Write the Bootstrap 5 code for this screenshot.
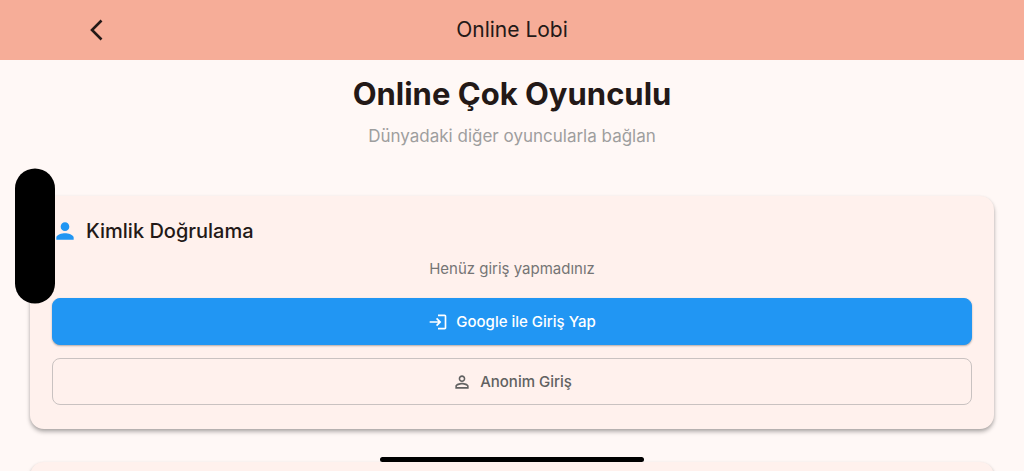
<!DOCTYPE html>
<html lang="tr">
<head>
<meta charset="utf-8">
<meta name="viewport" content="width=device-width, initial-scale=1">
<title>Online Lobi</title>
<link href="https://cdn.jsdelivr.net/npm/bootstrap@5.3.0/dist/css/bootstrap.min.css" rel="stylesheet">
<style>
  body { font-family: Inter, "Liberation Sans", sans-serif; background: #fff8f6; color: #231917; }
  .app-shell { height: 100vh; }
  .app-bar { height: 60px; background: #f6ad98; padding: 0 84px; }
  .app-title { font-size: 21px; line-height: 28px; font-weight: 400; }
  .back-btn { left: 84px; width: 26px; height: 26px; color: #231917; }
  .lobby { padding: 14px 30px 0; }
  .lobby-title { font-size: 31px; line-height: 40px; font-weight: 700; }
  .lobby-sub { font-size: 17px; line-height: 24px; color: #9e9e9e; margin: 10px 0 48px; }
  .panel { background: #fff1ed; border-radius: 14px; box-shadow: 0 3px 4px rgba(0,0,0,.27), 0 1px 3px rgba(0,0,0,.1); padding: 20px 22px 24px; margin-bottom: 33px; }
  .panel-title { font-size: 20px; line-height: 30px; font-weight: 500; }
  .panel-icon { width: 26px; height: 26px; color: #2196f3; }
  .status { font-size: 15px; line-height: 20px; color: #757575; margin: 13px 0 19px; }
  .actions { gap: 13px; }
  .action { --bs-btn-font-size: 15px; --bs-btn-font-weight: 500; --bs-btn-border-radius: 8px; --bs-btn-line-height: 20px; height: 47px; }
  .action-google { --bs-btn-color: #fff; --bs-btn-bg: #2196f3; --bs-btn-border-color: #2196f3; --bs-btn-hover-color: #fff; --bs-btn-hover-bg: #1e88e5; box-shadow: 0 1px 2px rgba(0,0,0,.3); }
  .action-guest { --bs-btn-color: #616161; --bs-btn-border-color: #c9c2c1; --bs-btn-hover-bg: #fbe7e3; }
  .action svg { width: 20px; height: 20px; }
  .camera-pill { left: 15px; width: 40px; height: 135px; background: #000; z-index: 1040; }
  .home-bar { bottom: 9px; width: 264px; height: 5px; background: #000; z-index: 1040; }
</style>
</head>
<body>
<div class="app-shell d-flex flex-column overflow-hidden">
  <header class="app-bar position-relative d-flex align-items-center justify-content-center flex-shrink-0">
    <button type="button" class="back-btn btn p-0 border-0 position-absolute d-flex" aria-label="Geri">
      <svg width="26" height="26" viewBox="0 0 26 26" fill="none" stroke="currentColor" stroke-width="2.600" aria-hidden="true"><path d="M17.500 3.500 8 13l9.500 9.500"/></svg>
    </button>
    <h1 class="app-title m-0">Online Lobi</h1>
  </header>
  <main class="lobby flex-grow-1 overflow-hidden">
    <h2 class="lobby-title text-center m-0">Online Çok Oyunculu</h2>
    <p class="lobby-sub text-center">Dünyadaki diğer oyuncularla bağlan</p>
    <section class="panel">
      <div class="d-flex align-items-center">
        <svg class="panel-icon flex-shrink-0 me-2" viewBox="0 0 24 24" fill="currentColor" aria-hidden="true"><path d="M12 12c2.210 0 4-1.790 4-4s-1.790-4-4-4-4 1.790-4 4 1.790 4 4 4zm0 2c-2.670 0-8 1.340-8 4v2h16v-2c0-2.660-5.330-4-8-4z"/></svg>
        <h3 class="panel-title m-0">Kimlik Doğrulama</h3>
      </div>
      <p class="status text-center">Henüz giriş yapmadınız</p>
      <div class="actions d-grid">
        <button type="button" class="action action-google btn d-flex align-items-center justify-content-center gap-2">
          <svg viewBox="0 0 24 24" fill="currentColor" aria-hidden="true"><path d="M11 7 9.600 8.400l2.600 2.600H2v2h10.200l-2.600 2.600L11 17l5-5-5-5zm9 12h-8v2h8c1.100 0 2-.9 2-2V5c0-1.100-.9-2-2-2h-8v2h8v14z"/></svg>
          <span>Google ile Giriş Yap</span>
        </button>
        <button type="button" class="action action-guest btn d-flex align-items-center justify-content-center gap-2">
          <svg viewBox="0 0 24 24" fill="currentColor" aria-hidden="true"><path d="M12 5.900c1.160 0 2.100.94 2.100 2.100s-.94 2.100-2.100 2.100S9.900 9.160 9.900 8s.94-2.100 2.100-2.100m0 9c2.970 0 6.100 1.460 6.100 2.100v1.100H5.900V17c0-.64 3.130-2.100 6.100-2.100M12 4C9.790 4 8 5.790 8 8s1.790 4 4 4 4-1.790 4-4-1.790-4-4-4zm0 9c-2.670 0-8 1.340-8 4v3h16v-3c0-2.660-5.330-4-8-4z"/></svg>
          <span>Anonim Giriş</span>
        </button>
      </div>
    </section>
    <section class="panel" aria-hidden="true"></section>
  </main>
</div>
<div class="camera-pill position-fixed top-50 translate-middle-y rounded-pill"></div>
<div class="home-bar position-fixed start-50 translate-middle-x rounded-pill"></div>
<script src="https://cdn.jsdelivr.net/npm/bootstrap@5.3.0/dist/js/bootstrap.bundle.min.js"></script>
</body>
</html>
